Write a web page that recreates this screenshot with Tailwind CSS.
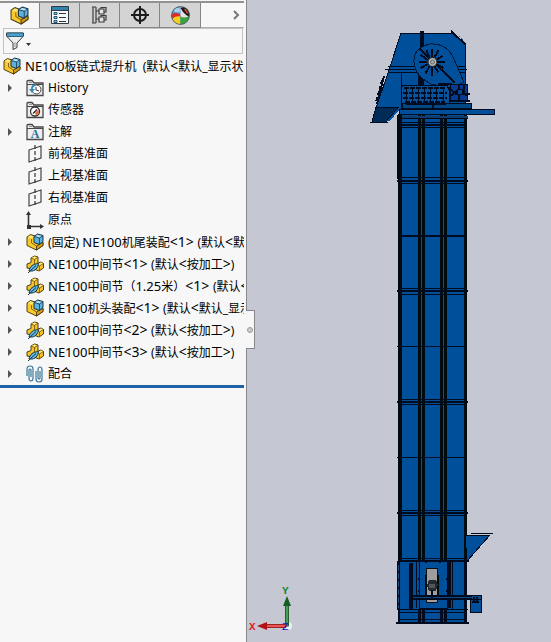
<!DOCTYPE html>
<html lang="zh-CN">
<head>
    <meta charset="UTF-8" />
    <meta name="viewport" content="width=device-width, initial-scale=1.0" />
    <title>NE100板链式提升机</title>
    <script src="https://cdn.jsdelivr.net/npm/@tailwindcss/browser@4"></script>
</head>
<body class="flex h-screen overflow-hidden bg-[#c5c8d3] font-['Noto_Sans','Noto_Sans_CJK_SC',sans-serif] text-xs text-black">

<!-- Shared icons -->
<svg class="hidden" aria-hidden="true">
    <symbol id="assembly" viewBox="0 0 18 18">
        <path d="M1 4 4.500 1.500 9 3V9L17 10V12.500L10.500 17 1 12.500Z" fill="#f8ca2e" stroke="#513e11" stroke-linejoin="round"/>
        <path d="M10.500 13 17 9V12.500L10.500 17Z" fill="#d79b17" stroke="#513e11" stroke-linejoin="round"/>
        <path d="M2 4 4.500 2.500 8 3.500 5.500 5.500Z" fill="#ffe87c"/>
        <path d="M5.500 6V10L10.500 13" fill="none" stroke="#8a681a"/>
        <path d="M8 3.500 11.500 1 17 2.500V8.500L13.500 11.500 8 9.500Z" fill="#5eb1da" stroke="#17354a" stroke-linejoin="round"/>
        <path d="M9 3.500 11.500 2 16 3 13.500 4.500Z" fill="#b5e2f5"/>
        <path d="M8 3.500 13.500 5 17 2.500M13.500 5V11.500" fill="none" stroke="#17354a" stroke-width=".8"/>
    </symbol>
    <symbol id="part" viewBox="0 0 18 18">
        <path d="M5 3 8.500 1 12 2V8L15 7 17.500 8.500V13L13 16 9 14.500 1 13V9L5 7.500Z" fill="#f5c42a" stroke="#513e11" stroke-linejoin="round"/>
        <path d="M5.500 3 8.500 1.500 11.500 2.500 8.500 4Z" fill="#ffe979"/>
        <path d="M12 9 15 7.500 17 8.500 14 10.500Z" fill="#ffe979"/>
        <path d="M5 3 8.500 4.500 12 2M8.500 4.500V9L13.500 11 17.500 8.500M13.500 11V15.500" fill="none" stroke="#6d5210" stroke-width=".8"/>
        <path d="M3 16C4 11 7 9 12.500 8.500 12 13 9 16.500 4.500 16Z" fill="#62b8e0" stroke="#163447"/>
        <path d="M2 18 10 10.500" stroke="#163447"/>
    </symbol>
    <symbol id="folder" viewBox="0 0 18 18">
        <path d="M1 16.500V2.500Q1 1.500 2 1.500H6L8 4H17V16.500Z" fill="#eeeeee" stroke="#484848" stroke-width="1.300"/>
        <path d="M1 5.500H17" stroke="#484848"/>
        <path d="M3 3.500H6" stroke="#999"/>
    </symbol>
    <symbol id="plane" viewBox="0 0 18 18">
        <path d="M3 5 15 1V13L3 17Z" fill="none" stroke="#444" stroke-width="1.200"/>
        <path d="M9 0V18" stroke="#333" stroke-width="1.200" stroke-dasharray="4 2"/>
    </symbol>
    <symbol id="arrow" viewBox="0 0 6 8"><path d="M1 0 5 4 1 8Z" fill="#555"/></symbol>
</svg>

<aside class="relative flex w-[45%] max-w-[247px] shrink-0 flex-col border-r border-[#85878c] bg-[#f7f7f7] pt-px">
    <nav class="mr-[2px] flex h-[27px] border-t-2 border-[#929292]">
        <button aria-label="设计树" class="flex w-[39px] items-center justify-center bg-[#f7f7f7]">
            <svg class="size-[19px]"><use href="#assembly"/></svg>
        </button>
        <button aria-label="属性" class="flex w-[41px] items-center justify-center border-x border-b border-[#858585] bg-[#d4d4d4]">
            <svg class="size-[18px]" viewBox="0 0 18 18">
                <path d="M.5.5h17v17H.5z" fill="#f7fafc" stroke="#303840"/>
                <path d="M1 1h16v3H1z" fill="#2f84b0"/>
                <path d="M1 4.500h16" stroke="#303840"/>
                <path d="M3 6.500h3v2H3zM3 10.500h3v2H3zM3 14.500h3v2H3z" fill="#8fcae6" stroke="#24536c"/>
                <path d="M8 7.500h7M8 11.500h7M8 15.500h7" stroke="#333"/>
            </svg>
        </button>
        <button aria-label="配置" class="flex w-10 items-center justify-center border-r border-b border-[#858585] bg-[#d4d4d4]">
            <svg class="size-[18px]" viewBox="0 0 18 18" fill="none" stroke="#3c3c3c" stroke-width="1.200">
                <path d="M1 1h4M1 17h4M2 1v16M5 1v16M5 5h3M5 13h3"/>
                <path d="M8 3h5v5H8zM8 11h5v5H8z" fill="#e4e4e4"/>
                <path d="M10 3V1.500h5V6h-2M10 11V9.500h5V14h-2"/>
            </svg>
        </button>
        <button aria-label="尺寸" class="flex w-10 items-center justify-center border-r border-b border-[#858585] bg-[#d4d4d4]">
            <svg class="size-[18px]" viewBox="0 0 18 18" fill="none" stroke="#1c1c1c" stroke-width="2">
                <circle cx="9" cy="9" r="6"/><path d="M9 0v18M0 9h18"/>
            </svg>
        </button>
        <button aria-label="外观" class="flex w-[41px] items-center justify-center border-r border-b border-[#858585] bg-[#d4d4d4]">
            <svg class="size-[19px]" viewBox="0 0 18 18">
                <circle cx="9" cy="9" r="8.500" fill="#3578c0"/>
                <path d="M9 9 1 7A8.500 8.500 0 0 1 9 .5Z" fill="#4fa3df"/>
                <path d="M.5 9Q1 7 5 6.500L9 8V11Q4 10 1 12Z" fill="#df2d23"/>
                <path d="M1 12Q5 9 9 10V17.500Q3 17 1 12Z" fill="#f3ce25"/>
                <path d="M9 10Q14 12 17.500 9 17 16 9 17.500Z" fill="#35a63c"/>
                <path d="M9 .5Q16 1 17.500 9 14 12 9 10Z" fill="#e9e4df"/>
                <path d="M9 2Q12 8 17 10L17.500 8Q17 2 11 1Z" fill="#241818"/>
                <path d="M13 3 16 7" stroke="#d6473e" stroke-width="1.500"/>
                <ellipse cx="6" cy="4" rx="3" ry="2" fill="#fff" fill-opacity=".5"/>
                <circle cx="9" cy="9" r="8.500" fill="none" stroke="#555" stroke-width=".8"/>
            </svg>
        </button>
        <button aria-label="更多" class="flex flex-1 items-center justify-end border-b border-[#b0b0b0] pr-1">
            <svg class="h-3 w-[7px]" viewBox="0 0 7 12" fill="none" stroke="#777" stroke-width="2"><path d="m1 2 4 4-4 4"/></svg>
        </button>
    </nav>

    <div class="mr-[3px] ml-[3px] flex h-[26px] items-center border border-[#c3c3c3] pl-0.5">
        <button aria-label="过滤器" class="flex items-end gap-0.5">
            <svg class="size-[18px]" viewBox="0 0 18 18">
                <path d="M.5 1v3L7 11v6.500l4-2V11l6.500-7V1Z" fill="#eee" stroke="#3d3d3d" stroke-linejoin="round"/>
                <path d="M1 1h16v3H1z" fill="#4ba3cd"/>
                <path d="M1 1h16M1 4.500h16" stroke="#2c607c"/>
                <path d="M9 10v5" stroke="#999"/>
            </svg>
            <svg class="mb-1 h-[3px] w-[5px]" viewBox="0 0 5 3"><path d="M0 0h5L2.500 3z" fill="#333"/></svg>
        </button>
    </div>

    <ul class="mr-[2px] overflow-hidden border-b-[3px] border-[#1e63a8] pt-px whitespace-nowrap">
        <li class="flex h-[22px] items-center gap-1 pl-[3px]">
            <svg class="size-[18px] shrink-0"><use href="#assembly"/></svg>
            <span class="leading-4"><span class="text-[13px]">NE100</span>板链式提升机&nbsp; (默认<span class="text-sm/4">&lt;</span>默认_显示状</span>
        </li>
        <li class="flex h-[22px] items-center pl-[7px]">
            <svg class="mr-[13px] h-2 w-1.5 shrink-0"><use href="#arrow"/></svg>
            <svg class="mr-1 size-[18px] shrink-0" viewBox="0 0 18 18">
                <use href="#folder"/>
                <circle cx="10.500" cy="10.500" r="4.500" fill="#fff" stroke="#444"/>
                <path d="M10 8v3l3 1" fill="none" stroke="#333"/>
                <path d="M10 5Q5 5 5 10H3l3 4 3-4H7Q7 7 10 7" fill="#398bb7"/>
            </svg>
            <span>History</span>
        </li>
        <li class="flex h-[22px] items-center pl-[26px]">
            <svg class="mr-1 size-[18px] shrink-0" viewBox="0 0 18 18">
                <use href="#folder"/>
                <circle cx="9" cy="10.500" r="4.500" fill="#fff" stroke="#333" stroke-width="1.300"/>
                <path d="M10 14.500 9 12l3-3 1 1Q13 14 10 14.500Z" fill="#e46b42"/><path d="m7 12.500 4-4" stroke="#222" stroke-width="1.300"/>
            </svg>
            <span>传感器</span>
        </li>
        <li class="flex h-[22px] items-center pl-[7px]">
            <svg class="mr-[13px] h-2 w-1.5 shrink-0"><use href="#arrow"/></svg>
            <svg class="mr-1 size-[18px] shrink-0" viewBox="0 0 18 18">
                <use href="#folder"/>
                <text x="9" y="15" text-anchor="middle" class="fill-[#236f99] font-['Liberation_Serif',serif] text-xs font-bold">A</text>
            </svg>
            <span>注解</span>
        </li>
        <li class="flex h-[22px] items-center pl-[26px]"><svg class="mr-1 size-[18px] shrink-0"><use href="#plane"/></svg><span>前视基准面</span></li>
        <li class="flex h-[22px] items-center pl-[26px]"><svg class="mr-1 size-[18px] shrink-0"><use href="#plane"/></svg><span>上视基准面</span></li>
        <li class="flex h-[22px] items-center pl-[26px]"><svg class="mr-1 size-[18px] shrink-0"><use href="#plane"/></svg><span>右视基准面</span></li>
        <li class="flex h-[22px] items-center pl-[26px]">
            <svg class="mr-1 size-[18px] shrink-0" viewBox="0 0 18 18">
                <path d="M2.500 3v12.500H15" fill="none" stroke="#333" stroke-width="1.600"/>
                <path d="m0 4 2.500-4L5 4zM14 13l4 2.500-4 2.500zM1 14h4v4H1z" fill="#333"/>
            </svg>
            <span>原点</span>
        </li>
        <li class="flex h-[22px] items-center pl-[7px]">
            <svg class="mr-[13px] h-2 w-1.5 shrink-0"><use href="#arrow"/></svg>
            <svg class="mr-1 size-[18px] shrink-0"><use href="#assembly"/></svg>
            <span class="leading-4">(固定) <span class="text-[13px]">NE100</span>机尾装配<span class="text-sm/4">&lt;1&gt; </span>(默认<span class="text-sm/4">&lt;</span>默</span>
        </li>
        <li class="flex h-[22px] items-center pl-[7px]">
            <svg class="mr-[13px] h-2 w-1.5 shrink-0"><use href="#arrow"/></svg>
            <svg class="mr-1 size-[18px] shrink-0"><use href="#part"/></svg>
            <span class="leading-4"><span class="text-[13px]">NE100</span>中间节<span class="text-sm/4">&lt;1&gt; </span>(默认<span class="text-sm/4">&lt;</span>按加工<span class="text-sm/4">&gt;</span>)</span>
        </li>
        <li class="flex h-[22px] items-center pl-[7px]">
            <svg class="mr-[13px] h-2 w-1.5 shrink-0"><use href="#arrow"/></svg>
            <svg class="mr-1 size-[18px] shrink-0"><use href="#part"/></svg>
            <span class="leading-4"><span class="text-[13px]">NE100</span>中间节（<span class="text-[13px]">1.25</span>米）<span class="text-sm/4">&lt;1&gt; </span>(默认<span class="text-sm/4">&lt;</span></span>
        </li>
        <li class="flex h-[22px] items-center pl-[7px]">
            <svg class="mr-[13px] h-2 w-1.5 shrink-0"><use href="#arrow"/></svg>
            <svg class="mr-1 size-[18px] shrink-0"><use href="#assembly"/></svg>
            <span class="leading-4"><span class="text-[13px]">NE100</span>机头装配<span class="text-sm/4">&lt;1&gt; </span>(默认<span class="text-sm/4">&lt;</span>默认_显示</span>
        </li>
        <li class="flex h-[22px] items-center pl-[7px]">
            <svg class="mr-[13px] h-2 w-1.5 shrink-0"><use href="#arrow"/></svg>
            <svg class="mr-1 size-[18px] shrink-0"><use href="#part"/></svg>
            <span class="leading-4"><span class="text-[13px]">NE100</span>中间节<span class="text-sm/4">&lt;2&gt; </span>(默认<span class="text-sm/4">&lt;</span>按加工<span class="text-sm/4">&gt;</span>)</span>
        </li>
        <li class="flex h-[22px] items-center pl-[7px]">
            <svg class="mr-[13px] h-2 w-1.5 shrink-0"><use href="#arrow"/></svg>
            <svg class="mr-1 size-[18px] shrink-0"><use href="#part"/></svg>
            <span class="leading-4"><span class="text-[13px]">NE100</span>中间节<span class="text-sm/4">&lt;3&gt; </span>(默认<span class="text-sm/4">&lt;</span>按加工<span class="text-sm/4">&gt;</span>)</span>
        </li>
        <li class="flex h-[22px] items-center pl-[7px]">
            <svg class="mr-[13px] h-2 w-1.5 shrink-0"><use href="#arrow"/></svg>
            <svg class="mr-1 size-[18px] shrink-0" viewBox="0 0 18 18" fill="none" stroke="#39789d" stroke-width="1.200">
                <path d="M1 11V4Q1 1 4 1T7 4V13Q7 16 5 16T3 13V5Q3 4 4 4T5 5V12"/>
                <path d="M10 6V14Q10 17 13 17T16 14V5Q16 2 14 2T12 5V13Q12 14 13 14T14 13V6"/>
            </svg>
            <span>配合</span>
        </li>
    </ul>

    <button aria-label="收起面板" class="absolute top-[310px] -right-[9px] flex h-[39px] w-[9px] items-center justify-center border-y border-r border-[#85878c] bg-[#f7f7f7]">
        <span class="size-[6px] rounded-full border border-[#999] bg-[#ccc]"></span>
    </button>
</aside>

<main class="min-w-0 flex-1">
    <svg class="h-full w-full" viewBox="247 0 304 642" shape-rendering="crispEdges" role="img" aria-label="NE100板链式提升机">
        <!-- head housing -->
        <path d="M401 33H453L465 45V118H403L398 108H376L389 70Z" fill="#004f9a" stroke="#000b20"/>
        <path d="M376 107H399L386 122H372Z" fill="#002b56" stroke="#000b20"/>
        <path d="M400 108 388 121" stroke="#004f9a" stroke-width="2"/>
        <path d="M370 122.500h18M385 69.500h82M388 66.500h77M388 72.500h77M401.500 73v36M465.500 45v50" stroke="#000b20"/>
        <path d="m451 31 15 14M384 76l-7 28" stroke="#000b20" stroke-width="2"/>
        <path d="m382 80-6 22" stroke="#000b20" stroke-width="2" stroke-dasharray="4 2"/>
        <path d="M420 31h4v54h-4zM418 72h3v14h-3z" fill="#000b20"/>
        <path d="m459 36 4 4" stroke="#1b5a9c" stroke-dasharray="2 1"/>
        <!-- chain guard and shaft -->
        <path d="M431 84Q415 76 414 62T430 44Q446 43 453 57L464 82 452 88Z" fill="#004f9a" stroke="#001737"/>
        <path d="m420 49 35 34" stroke="#000b20" stroke-width="2"/>
        <path d="M437 62h8M436.600 64.200l7 4M434.500 66.500l4 6M432 67v9M429.500 66.500l-4 7M427.500 64.200l-7 4M427 62h-8M427.500 59.800l-7-5M429.500 57.500l-3-7M432 57v-8M434.500 57.500l4-7M436.600 59.800l6-4" stroke="#000b20" stroke-width="2"/>
        <circle cx="432.500" cy="62" r="4.500" fill="#b9b9b3" stroke="#111" shape-rendering="auto"/>
        <circle cx="432.500" cy="62" r="2" fill="#aaa" stroke="#666" shape-rendering="auto"/>
        <!-- drive -->
        <path d="M403 85H447L449 90V106H401V88Z" fill="#07539b" stroke="#000b20"/>
        <path d="M404 88h42M403 92.500h44M403 97.500h44M405 102h40" stroke="#000b20" stroke-width="2" stroke-dasharray="5 1"/>
        <path d="M406 87v14M412 87v14M418 87v14M424 87v14M430 87v14M436 87v14M443 87v14" stroke="#000b20"/>
        <path d="M450 84H467V100H450Z" fill="#063b91" stroke="#000b20"/>
        <path d="M438 84h14M449 88l7 6h14M450 96l9-6 9 6M459 84v16M464 84v11M450 101h20" fill="none" stroke="#000b20" stroke-width="2"/>
        <circle cx="460" cy="92" r="3" fill="#064690" stroke="#000b20"/>
        <path d="M402 103H471V108H402Z" fill="#004784" stroke="#000b20"/>
        <path d="M432.500 104v4M406 103.500h40" stroke="#000b20" stroke-width="2"/>

        <!-- casing -->
        <path d="M398 114h69v509h-69z" fill="#004f9a"/>
        <path d="M398 114h4v447h-4zM418 114h3v447h-3zM422 114h3v447h-3zM440 114h3v447h-3zM444 114h3v447h-3zM464 114h3v447h-3zM397 115h2v64h-2z" fill="#000b10"/>
        <path d="M421.500 118v443M443.500 118v443" stroke="#174d77"/>
        <path d="M398 122.500h69M400 127.500h65M400 177.500h65M400 183.500h65M400 288.500h65M400 294.500h65M397 346.500h69M400 399.500h65M400 404.500h65M397 457.500h70M400 510.500h65M400 515.500h65M400 558.500h65" stroke="#000b20"/>
        <path d="M398 125h69M397 181h71M398 236h69M397 291h71M397 402h71M397 513h71M398 561h71" stroke="#000b20" stroke-width="2"/>
        <path d="M399 109H494V114H399Z" fill="#004f9a" stroke="#000b20"/>
        <path d="M402 116.500h66" stroke="#123b68" stroke-width="2"/>
        <path d="M399 114.500h96M402 118.500h66" stroke="#000b20"/>

        <!-- inlet chute -->
        <path d="M466 535H490L467 561Z" fill="#004f9a"/>
        <path d="M466 535.500h24M471 533.500h22M490 535 467 561" fill="none" stroke="#000b20"/>

        <!-- boot -->
        <path d="M397 561h3v49h-3zM409 563h4v46h-4zM416 562h1v46h-1zM448 562h3v46h-3zM452 562h1v47h-1zM464 561h3v62h-3zM398 609h2v14h-2zM418 609h3v14h-3zM422 609h3v14h-3zM440 609h3v14h-3zM444 609h3v14h-3z" fill="#000b20"/>
        <path d="M398 609.500h70M399 612.500h66M400 619.500h65" stroke="#000b20"/>
        <path d="M398.500 565v43" stroke="#174d77" stroke-dasharray="6 2"/>
        <path d="M396 622h73v2h-73z" fill="#000b20"/>
        <path d="M419 561v47h28v-47" fill="none" stroke="#000b20"/>
        <path d="M425 562h2M439 562h2M418 579h2M446 579h2M418 591h2M446 591h2" stroke="#000b20" stroke-width="2"/>
        <path d="M426.500 568.500h11v34h-11z" fill="#9d9e9d" stroke="#111"/>
        <path d="M425 575h2v21h-2zM437 575h2v21h-2z" fill="#000b10"/>
        <path d="M470.500 595.500h11v17h-11z" fill="#004f9a" stroke="#000b20"/>
        <path d="M410 595.500h71v4h-71z" fill="#064a88" stroke="#000b20"/>
        <path d="M410 596h62M410 599h62" stroke="#000b20" stroke-width="2"/>
        <path d="M427 585l2-5h7l2 5-2 6h-7z" fill="#242b2d"/>
        <path d="M429 584h6v4h-6z" fill="#50575a"/>
        <path d="M432 590v8M409 593h3v9h-3M474 597v6M477 597v6M472 602h7" fill="none" stroke="#000b20" stroke-width="2"/>

        <!-- orientation triad -->
        <g shape-rendering="auto">
            <circle cx="288" cy="626" r="4" fill="#eeeef8"/>
            <path d="M285.500 603h3v23h-3z" fill="#44a153" stroke="#24612f"/>
            <path d="m283 606 4-10 4 10Z" fill="#145d24"/>
            <path d="M264 624.500h22v3h-22z" fill="#ed5454" stroke="#9b2323"/>
            <path d="m267 622-10 4 10 4Z" fill="#b31218"/>
            <text x="249" y="630" class="fill-[#e51d25] font-['Liberation_Mono',monospace] text-[11px] font-bold">X</text>
            <text x="282" y="594" class="fill-[#19842a] font-['Liberation_Mono',monospace] text-[11px] font-bold">Y</text>
            <text x="282" y="630" class="fill-[#1718be] font-['Liberation_Mono',monospace] text-[11px]">Z</text>
        </g>
    </svg>
</main>

</body>
</html>
